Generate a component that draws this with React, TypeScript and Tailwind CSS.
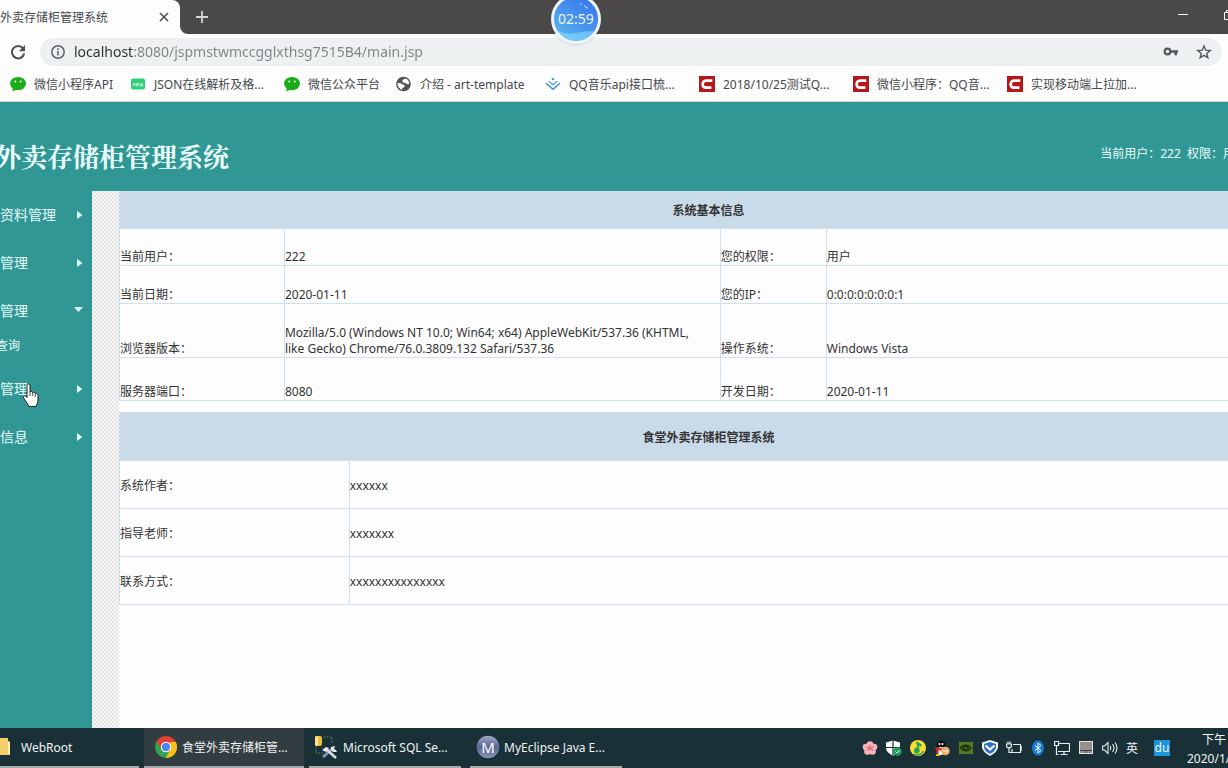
import React from "react";

const WeChat = () => (
  <svg width="16" height="16" viewBox="0 0 16 16" className="shrink-0">
    <ellipse cx="8" cy="7.6" rx="8" ry="6.7" fill="#1aad19" />
    <path d="M3 12l-.6 3.4L7 13.6z" fill="#1aad19" />
    <circle cx="5.3" cy="5.6" r="1" fill="#fff" />
    <circle cx="10.7" cy="5.6" r="1" fill="#fff" />
  </svg>
);

const JsonNew = () => (
  <svg width="16" height="16" viewBox="0 0 16 16" className="shrink-0">
    <rect x="1" y="2.500" width="14" height="11" rx="2" fill="#2fce79" />
    <path
      d="M3.500 10V7.300h1.600V10M6.700 8.700h1.800V7.300H6.700V10h1.800M10 7.200V10h2.600V7.200M11.300 7.500V10"
      fill="none"
      stroke="#d5f7e4"
      strokeWidth=".8"
    />
  </svg>
);

const Globe = () => (
  <svg width="16" height="16" viewBox="0 0 16 16" className="shrink-0">
    <circle cx="7.500" cy="8" r="7.300" fill="#505357" />
    <path d="M1.700 7l3.200.3 1.800 1.200 2 .7-.4 2.100-2 .8-.2 1.700C3.300 12.900 1.300 10.200 1.700 7z" fill="#fff" />
    <path d="M7.200 3.400l3.200-1 2.800 3.300-.2 2.300-2.200.3-1.300-1.400-2.600-.3-.6-1.500z" fill="#fff" />
  </svg>
);

const Juejin = () => (
  <svg width="16" height="16" viewBox="0 0 16 16" className="shrink-0" fill="none" stroke="#3b8ed0" strokeWidth="1.500">
    <path d="M1 7.200l7 6 7-6" />
    <path d="M3.800 5.200L8 8.800l4.200-3.600" stroke="#62a8dd" />
    <path d="M6.300 3L8 4.500 9.700 3 8 1.700z" fill="#3b8ed0" stroke="none" />
  </svg>
);

const CLogo = () => (
  <svg width="16" height="16" viewBox="0 0 16 16" className="shrink-0">
    <rect width="16" height="16" fill="#b5171b" />
    <path d="M13.300 4.600H7.800C5 4.600 3.700 6.200 3.600 8.200c0 2.300 1.300 3.400 3.500 3.400h5.300" fill="none" stroke="#fff" strokeWidth="2.600" />
  </svg>
);

const bookmarks = [
  { label: "微信小程序API", icon: <WeChat />, width: "w-[120px]" },
  { label: "JSON在线解析及格...", icon: <JsonNew />, width: "w-[154px]" },
  { label: "微信公众平台", icon: <WeChat />, width: "w-[112px]" },
  { label: "介绍 - art-template", icon: <Globe />, width: "w-[149px]" },
  { label: "QQ音乐api接口梳...", icon: <Juejin />, width: "w-[154px]" },
  { label: "2018/10/25测试Q...", icon: <CLogo />, width: "w-[154px]" },
  { label: "微信小程序：QQ音...", icon: <CLogo />, width: "w-[154px]" },
  { label: "实现移动端上拉加...", icon: <CLogo />, width: "w-[154px]" },
];

function Browser() {
  return (
    <div className="shrink-0 bg-[#fdfdfd] text-[#45484c]">
      <div className="flex h-[34px] justify-between bg-[#4b4947]">
        <div className="flex">
          <div className="flex w-[180px] items-center justify-between rounded-tr-lg bg-[#fdfdfd] pr-[9px]">
            <span className="pt-0.5 text-xs whitespace-nowrap">外卖存储柜管理系统</span>
            <button aria-label="关闭标签页" className="p-0.5">
              <svg width="10" height="10" viewBox="0 0 10 10" stroke="#4a4d50" strokeWidth="1.600">
                <path d="M1 1l8 8M9 1L1 9" />
              </svg>
            </button>
          </div>
          <svg width="8" height="8" viewBox="0 0 8 8" className="self-end">
            <path d="M0 0a8 8 0 0 0 8 8H0z" fill="#fdfdfd" />
          </svg>
          <button aria-label="新标签页" className="px-2">
            <svg width="12" height="12" viewBox="0 0 12 12" stroke="#d6d6d5" strokeWidth="1.800">
              <path d="M6 0v12M0 6h12" />
            </svg>
          </button>
        </div>
        <div className="flex items-start gap-[36px] overflow-hidden pt-[9px]">
          <button aria-label="最小化">
            <svg width="10" height="12" viewBox="0 0 10 12">
              <path d="M0 5.500h10" stroke="#fff" />
            </svg>
          </button>
          <button aria-label="还原" className="-mr-[6px]">
            <svg width="10" height="12" viewBox="0 0 10 12" fill="none" stroke="#fff">
              <path d="M.5 3.500h7v7h-7zM2.500 3.500v-2h7v7h-2" />
            </svg>
          </button>
        </div>
      </div>
      <div className="flex h-8 items-end gap-[14px] pr-[6px] pl-[10px]">
        <button aria-label="重新加载" className="flex h-7 items-center">
          <svg width="16" height="16" viewBox="0 0 16 16">
            <path d="M13 4.300A6.200 6.200 0 1 0 14.200 9.500" fill="none" stroke="#4d5156" strokeWidth="2" />
            <path d="M15 1v6.200H8.800z" fill="#4d5156" />
          </svg>
        </button>
        <div className="flex h-7 min-w-0 flex-1 items-center gap-[9px] rounded-full bg-[#eef1f2] pr-[10px] pl-[11px]">
          <svg width="14" height="14" viewBox="0 0 14 14" fill="none" stroke="#5f6368" strokeWidth="1.500">
            <circle cx="7" cy="7" r="6.200" />
            <path d="M7 6v4.500M7 3.300v1.600" />
          </svg>
          <input
            aria-label="地址"
            defaultValue="localhost:8080/jspmstwmccgglxthsg7515B4/main.jsp"
            className="min-w-0 flex-1 bg-[linear-gradient(90deg,#2b2d30_60px,#808386_60px)] bg-clip-text text-sm text-transparent outline-none"
          />
          <button aria-label="密码">
            <svg width="16" height="16" viewBox="0 0 16 16">
              <circle cx="4.500" cy="7.500" r="2.800" fill="none" stroke="#54585d" strokeWidth="2.200" />
              <path d="M7 6.200h8v2.600h-1v2.400h-2.600V8.800H7z" fill="#54585d" />
            </svg>
          </button>
          <button aria-label="收藏" className="ml-2">
            <svg width="16" height="16" viewBox="0 0 16 16" fill="none" stroke="#54585d" strokeWidth="1.400">
              <path d="M8 2l1.700 4.200 4.500.3-3.500 2.900 1.200 4.400L8 11.400l-3.900 2.400 1.200-4.400-3.500-2.900 4.500-.3z" />
            </svg>
          </button>
        </div>
      </div>
      <nav aria-label="书签" className="flex h-9 items-center overflow-hidden border-b border-[#c9d6d6] pl-[10px]">
        {bookmarks.map((b) => (
          <a key={b.label} href="#" className={`flex shrink-0 items-center gap-2 text-xs whitespace-nowrap ${b.width}`}>
            {b.icon}
            <span className="pt-0.5">{b.label}</span>
          </a>
        ))}
      </nav>
    </div>
  );
}

function MenuItem({ label, open }: { label: string; open?: boolean }) {
  return (
    <a href="#" className="flex h-12 items-center justify-between pr-[9px] text-sm text-[#e6fbfa]">
      {label}
      {open ? (
        <svg width="9" height="8" viewBox="0 0 9 8">
          <path d="M0 0h9L4.500 5z" fill="#dffffd" />
        </svg>
      ) : (
        <svg width="6" height="8" viewBox="0 0 6 8">
          <path d="M0 0v8l5.500-4z" fill="#dffffd" />
        </svg>
      )}
    </a>
  );
}

const line = "border border-[#cfe0ee]";
const head = `${line} p-0 pt-0.5`;
const rows = [
  { h: "h-[37px]", c: ["当前用户：", "222", "您的权限：", "用户"] },
  { h: "h-[38px]", c: ["当前日期：", "2020-01-11", "您的IP：", "0:0:0:0:0:0:0:1"] },
  {
    h: "h-[54px]",
    c: [
      "浏览器版本：",
      "Mozilla/5.0 (Windows NT 10.0; Win64; x64) AppleWebKit/537.36 (KHTML, like Gecko) Chrome/76.0.3809.132 Safari/537.36",
      "操作系统：",
      "Windows Vista",
    ],
  },
  { h: "h-[43px]", c: ["服务器端口：", "8080", "开发日期：", "2020-01-11"] },
];
const authors = [
  ["系统作者：", "xxxxxx"],
  ["指导老师：", "xxxxxxx"],
  ["联系方式：", "xxxxxxxxxxxxxxx"],
];

function Content() {
  return (
    <main className="-mr-[70px] min-w-0 flex-1 text-xs leading-4 text-[#333]">
      <table className="w-full table-fixed border-collapse">
        <colgroup>
          <col className="w-[14%]" />
          <col className="w-[37%]" />
          <col className="w-[9%]" />
          <col className="w-[40%]" />
        </colgroup>
        <thead>
          <tr className="h-[37px] bg-[#c9dae9]">
            <th colSpan={4} className={head}>系统基本信息</th>
          </tr>
        </thead>
        <tbody>
          {rows.map((r) => (
            <tr key={r.c[0]} className={r.h}>
              {r.c.map((t, i) => (
                <td key={i} className={`${line} p-0 pr-3 align-bottom`}>{t}</td>
              ))}
            </tr>
          ))}
        </tbody>
      </table>
      <table className="mt-[11px] w-full table-fixed border-collapse">
        <colgroup>
          <col className="w-[19.5%]" />
          <col />
        </colgroup>
        <thead>
          <tr className="h-12 bg-[#c9dae9]">
            <th colSpan={2} className={head}>食堂外卖存储柜管理系统</th>
          </tr>
        </thead>
        <tbody>
          {authors.map(([k, v]) => (
            <tr key={k} className="h-12">
              <td className={head}>{k}</td>
              <td className={head}>{v}</td>
            </tr>
          ))}
        </tbody>
      </table>
    </main>
  );
}

const Folder = () => (
  <svg width="11" height="20" viewBox="0 0 11 20">
    <path d="M0 1h8v3l2 1v13H0z" fill="#f3cf6b" />
    <path d="M8 4l2 1v13l-2-2z" fill="#fff0b5" />
  </svg>
);
const Chrome = () => (
  <svg width="22" height="22" viewBox="0 0 22 22">
    <path d="M11 11L1.500 5.500A11 11 0 0 1 20.500 5.500z" fill="#e34133" />
    <path d="M11 11L1.500 5.500A11 11 0 0 0 11 22z" fill="#32a350" />
    <path d="M11 11h0L20.500 5.500A11 11 0 0 1 11 22z" fill="#fbc117" />
    <path d="M1.500 5.500L6.700 13.500 11 11V6h9.700z" fill="#e34133" />
    <path d="M6.500 13.500L11 22l4.500-8.500z" fill="#32a350" />
    <path d="M11 22l4.800-8.500L15 6h5.700A11 11 0 0 1 11 22z" fill="#fbc117" />
    <circle cx="11" cy="11" r="5.200" fill="#fff" />
    <circle cx="11" cy="11" r="4.200" fill="#4a84ee" />
  </svg>
);
const Sql = () => (
  <svg width="23" height="24" viewBox="0 0 23 24">
    <path d="M9 2h8v6M1 12v6h7" fill="none" stroke="#6c8a77" strokeDasharray="1.500 1.500" />
    <rect y="1" width="7" height="10" rx="2" fill="#f2bd3c" />
    <rect y="1" width="3" height="10" rx="1.500" fill="#fbe39a" />
    <path d="M8 22L18 13" stroke="#7f97b8" strokeWidth="3" />
    <path d="M11 14l10 9" stroke="#d9dde0" strokeWidth="2.600" />
    <path d="M7 15l4-3 3 1-3 4zM16 12l4-1-1 3 2 1 1 2-4 0-2-2z" fill="#e6e9eb" />
  </svg>
);
const MyEclipse = () => (
  <svg width="24" height="24" viewBox="0 0 24 24">
    <defs>
      <linearGradient id="ball" x1="0" y1="0" x2="0" y2="1">
        <stop offset="0" stopColor="#9fa6c4" />
        <stop offset=".5" stopColor="#5c6795" />
        <stop offset="1" stopColor="#8992b8" />
      </linearGradient>
    </defs>
    <circle cx="12" cy="12" r="11.300" fill="url(#ball)" />
    <text x="12" y="17.500" textAnchor="middle" fontSize="15" fill="#fff" fontFamily="Noto Sans, sans-serif">M</text>
  </svg>
);

const tasks = [
  { label: "WebRoot", icon: <Folder />, box: "w-[139px] mr-[5px] gap-[10px]" },
  { label: "食堂外卖存储柜管...", icon: <Chrome />, box: "w-40 mr-[5px] pl-[11px] gap-[5px] bg-[#313d40]" },
  { label: "Microsoft SQL Se...", icon: <Sql />, box: "w-[152px] mr-[9px] pl-[6px] gap-[5px]" },
  { label: "MyEclipse Java E...", icon: <MyEclipse />, box: "w-[152px] pl-[6px] gap-1" },
];

const tray: [string, React.ReactNode][] = [
  ["花", <g key="a"><g fill="#f6b4b9"><circle cx="8" cy="4.500" r="3.300" /><circle cx="12" cy="7" r="3.300" /><circle cx="10.500" cy="11.500" r="3.300" /><circle cx="5.500" cy="11.500" r="3.300" /><circle cx="4" cy="7" r="3.300" /></g><path d="M8 5v3.500l3 2M8 8.500l-3 2M8 8.500L4.500 7M8 8.500L11.500 7" fill="none" stroke="#dd6376" strokeWidth="1.200" /></g>],
  ["安全", <g key="b"><path d="M7 .500l7 2v5c0 4-3.500 6.500-7 8-3.500-1.500-7-4-7-8v-5z" fill="#fff" /><path d="M7 0v15M0 7.500h14" stroke="#1a3338" strokeWidth="1.200" /><circle cx="11.500" cy="11.500" r="4.300" fill="#1f9d56" /><path d="M9.500 11.500l1.500 1.500 2.500-3" fill="none" stroke="#fff" /></g>],
  ["音乐", <g key="c"><circle cx="8" cy="8" r="8" fill="#f8de35" /><path d="M7 1.500l5 3.200-1.300 2-2-1 1 4.800a2.900 2.900 0 1 1-2.300-3L6 2z" fill="#2aa35a" /><path d="M4 14a7 7 0 0 0 9.500-3" stroke="#2aa35a" strokeWidth="1.500" fill="none" /></g>],
  ["QQ", <g key="d"><ellipse cx="7" cy="7" rx="4.800" ry="7" fill="#111" /><ellipse cx="7" cy="11" rx="3.500" ry="4" fill="#fff" /><circle cx="5.500" cy="4" r="1" fill="#fff" /><circle cx="8.500" cy="4" r="1" fill="#fff" /><path d="M1.500 8c3 2 8 2 10.500-.5M3.500 9v4" stroke="#e02b2b" strokeWidth="2.200" fill="none" /><circle cx="11.500" cy="11" r="4.300" fill="#efb275" /><path d="M9.500 11h4" stroke="#fff" /><path d="M2 15h4" stroke="#f3b21b" strokeWidth="2" /></g>],
  ["显卡", <g key="e"><rect x="1" y="2" width="14" height="12" fill="#507a1d" /><path d="M2.500 8C5 4 10 4 13 8c-3 4-8 3.500-10.500 0zM5 8c1.500-2.500 4-2 5.500 0C9 10 7 10 5 8z" fill="none" stroke="#13240c" strokeWidth="1.200" /></g>],
  ["管家", <g key="f"><path d="M8 0l8 2.500v4c0 4-3.500 7-8 9.500C3.500 13.500 0 10.500 0 6.500v-4z" fill="#f4faff" /><path d="M8 2l6 2v3c0 3-2.500 5-6 7-3.500-2-6-4-6-7V4z" fill="#2c6fc9" /><path d="M3.500 5.500L8 9.500l4.500-4" stroke="#fff" strokeWidth="2.200" fill="none" /></g>],
  ["电池", <g key="g" fill="none" stroke="#e8eded" strokeWidth="1.200"><path d="M7 4.500h7.500v8H6V9M14.500 7h1.500v3h-1.500M.6 4h4.800v2c0 2.300-4.800 2.300-4.800 0zM2 4V1.500M4 4V1.500M3 8v4.500h3" /></g>],
  ["蓝牙", <g key="h"><ellipse cx="8" cy="8" rx="6" ry="7.500" fill="#147bd6" /><path d="M5 5.500l6 5-3 2.500V3l3 2.500-6 5" fill="none" stroke="#fff" /></g>],
  ["网络", <g key="i" fill="none" stroke="#e8eded" strokeWidth="1.200"><path d="M5 3.500h10.500v8H4M10 11.500v3M6.500 14.500h7M.6 1.500h4v4h-4zM2.500 5.500v9h2" /></g>],
  ["输入", <g key="j"><rect x="1.500" y="1.500" width="13" height="12" fill="#98908c" stroke="#e2e2e2" /><path d="M2 10.500h12M8 10.500V13" stroke="#3d3d3d" /></g>],
  ["音量", <g key="k" fill="none" stroke="#e8eded" strokeWidth="1.100"><path d="M.6 6h2L6 2.500v11L2.600 10h-2zM8 6q1.500 2 0 4M10.500 4q3 4 0 8M13 2.500q4 5.500 0 11" /></g>],
];

function Taskbar() {
  return (
    <footer className="flex h-10 shrink-0 items-stretch justify-between overflow-hidden bg-[#183036] text-xs text-[#f1f4f4]">
      <div className="flex">
        {tasks.map((t) => (
          <button key={t.label} className={`flex items-center border-b-2 border-[#a4abad] whitespace-nowrap ${t.box}`}>
            {t.icon}
            <span className="pt-0.5">{t.label}</span>
          </button>
        ))}
      </div>
      <div className="flex items-center">
        <div className="flex items-center gap-2">
          {tray.map(([name, g]) => (
            <button key={name} aria-label={name}>
              <svg width="16" height="16" viewBox="0 0 16 16">{g}</svg>
            </button>
          ))}
          <button className="pt-0.5">英</button>
        </div>
        <button className="ml-4 h-4 w-4 bg-[#1f93dd] text-xs leading-4">du</button>
        <div className="ml-[17px] w-[41px] overflow-hidden pt-0.5 leading-[19px] whitespace-nowrap">
          <div className="pl-[15px]">下午</div>
          <div>2020/1/</div>
        </div>
      </div>
    </footer>
  );
}

export default function App() {
  return (
    <div className="relative flex h-screen flex-col overflow-hidden bg-[#fdfdfd] font-['Noto_Sans','Noto_Sans_CJK_SC',sans-serif]">
      <Browser />
      <header className="flex h-[89px] shrink-0 items-center justify-between overflow-hidden bg-[#319795] pt-[18px] text-[#e9fdfc]">
        <h1 className="-ml-[5px] text-[26px] leading-8 font-bold whitespace-nowrap font-['Noto_Serif_CJK_SC','Noto_Sans_CJK_SC',serif]">
          外卖存储柜管理系统
        </h1>
        <p className="-mr-[19px] mb-1 text-xs whitespace-pre">当前用户：222  权限：用户</p>
      </header>
      <div className="flex min-h-0 flex-1 overflow-hidden">
        <nav aria-label="菜单" className="w-[92px] shrink-0 bg-[#319795]">
          <MenuItem label="资料管理" />
          <MenuItem label="管理" />
          <MenuItem label="管理" open />
          <a href="#" className="-ml-1 block h-[30px] text-xs leading-[22px] text-[#e6fbfa]">查询</a>
          <MenuItem label="管理" />
          <MenuItem label="信息" />
        </nav>
        <div className="w-[27px] shrink-0 bg-[#f8f8f8] bg-[conic-gradient(#e4e4e4_25%,transparent_25%_50%,#e4e4e4_50%_75%,transparent_75%)] bg-size-[4px_4px]" />
        <Content />
      </div>
      <Taskbar />
      <div className="absolute -top-[6px] left-[551px] flex h-[50px] w-[50px] items-center justify-center rounded-full border-[3px] border-[#edf5fb] bg-[linear-gradient(215deg,#3a7af0_15%,#4a98ec_55%,#5cc0f2)] text-sm text-[#e6f4ff] shadow">
        02:59
        <svg width="44" height="44" viewBox="0 0 44 44" className="absolute inset-0">
          <path d="M4 34q8 4 18 2t18-2q-6 10-18 10T4 34z" fill="#8fdcff" opacity=".55" />
          <path d="M26 6.500l2 1M30 8.500l4 3" stroke="#cfe6ff" />
        </svg>
      </div>
      <svg width="18" height="25" viewBox="0 0 18 25" className="absolute top-[383px] left-[22px]">
        <path
          d="M5 2.500C5 .5 8 .5 8 2.500V9c1-1 2.500-.5 2.700.6.9-.8 2.300-.3 2.500.8 1.200-.6 2.800 0 2.800 1.600v5c0 3-1.500 4-2 6.500H7C6 20.500 3 18 1.500 14.500c-.5-1.500 1.300-2.300 2.300-1.200L5 14.500z"
          fill="#fff"
          stroke="#222"
        />
        <path d="M8 9v4M10.700 9.800V13M13.200 10.500V14" stroke="#222" strokeWidth=".8" />
      </svg>
    </div>
  );
}
